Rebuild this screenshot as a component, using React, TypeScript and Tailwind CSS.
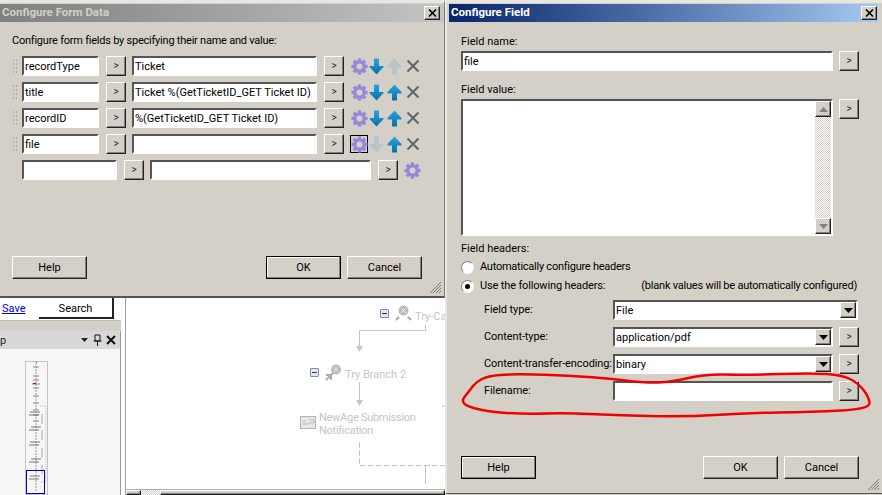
import type { ReactNode } from 'react';

const sunken = 'border-2 border-t-[#555] border-l-[#555] border-b-white border-r-white bg-white';
const raised = 'border border-t-white border-l-white border-b-[#222] border-r-[#222] shadow-[inset_-1px_-1px_0_#808080] bg-[#d4d0c8]';
const checker = 'bg-[conic-gradient(#fff_25%,#d4d0c8_0_50%,#fff_0_75%,#d4d0c8_0)] bg-[length:2px_2px]';

const Field = ({ text, className }: { text?: string; className: string }) => (
  <div className={`${sunken} ${className} h-[20px] pl-px text-[11px] leading-[17px] text-black whitespace-nowrap overflow-hidden shrink-0`}>{text}</div>
);

const MoreBtn = () => (
  <div className={`${raised} w-[20px] h-[20px] shrink-0 flex items-center justify-center text-[10px] leading-none text-[#102040]`}>&gt;</div>
);

const DlgBtn = ({ label, bold, className }: { label: string; bold?: boolean; className?: string }) => (
  <div className={`${bold ? 'border border-black shadow-[inset_-1px_-1px_0_#808080,inset_1px_1px_0_#fff]' : raised} w-[75px] h-[23px] pt-px flex items-center justify-center text-[11px] text-black bg-[#d4d0c8] ${className ?? ''}`}>{label}</div>
);

const Gear = () => (
  <svg width="17" height="17" viewBox="0 0 17 17" className="shrink-0">
    <circle cx="8.5" cy="8.5" r="4.6" fill="none" stroke="#9a86d9" strokeWidth="3.4" />
    {[0, 45, 90, 135].map(a => (
      <rect key={a} x="6.8" y="0.4" width="3.4" height="16.2" fill="#9a86d9" transform={`rotate(${a} 8.5 8.5)`} />
    ))}
    <circle cx="8.5" cy="8.5" r="3" fill="#d4d0c8" />
  </svg>
);

const Arrow = ({ up, off }: { up?: boolean; off?: boolean }) => (
  <svg width="15" height="17" viewBox="0 0 15 17" className="shrink-0">
    <defs>
      <linearGradient id="blueArrow" x1="0" y1="0" x2="0" y2="1">
        <stop offset="0" stopColor="#2ba4dd" />
        <stop offset="1" stopColor="#0670a8" />
      </linearGradient>
    </defs>
    <path
      d={up ? 'M7.5 0.5L14.5 8V9.5H10V16.5H5V9.5H0.5V8Z' : 'M5 0.5H10V8H14.5V9L7.5 16.5L0.5 9V8H5Z'}
      fill={off ? '#b8c4ca' : 'url(#blueArrow)'}
    />
  </svg>
);

const CrossIcon = () => (
  <svg width="14" height="14" viewBox="0 0 14 14" className="shrink-0">
    <path d="M1.5 1.5L12.5 12.5M12.5 1.5L1.5 12.5" stroke="#5d646c" strokeWidth="2" />
  </svg>
);

const CloseBtn = () => (
  <div className={`${raised} w-[16px] h-[14px] flex items-center justify-center`}>
    <svg width="9" height="8" viewBox="0 0 9 8"><path d="M1 0.5L8 7.5M8 0.5L1 7.5" stroke="#000" strokeWidth="1.6" /></svg>
  </div>
);

const Grip = () => (
  <svg width="14" height="14" viewBox="0 0 14 14" className="absolute right-[2px] bottom-[2px]">
    <path d="M13 2L2 13M13 5L5 13M13 8L8 13M13 11L11 13" stroke="#777" strokeWidth="1" />
  </svg>
);

const Dots = () => (
  <div className="w-[7px] h-[16px] mr-[3px] bg-[radial-gradient(#aaa_1px,transparent_1px)] bg-[length:3px_4px] shrink-0" />
);

const rows = [
  { name: 'recordType', value: 'Ticket', upOff: true },
  { name: 'title', value: 'Ticket %(GetTicketID_GET Ticket ID)' },
  { name: 'recordID', value: '%(GetTicketID_GET Ticket ID)' },
  { name: 'file', value: '', downOff: true, focused: true },
];

const FormRow = ({ row }: { row: (typeof rows)[number] }) => (
  <div className="flex items-center h-[20px] mb-[6px] pl-[12px]">
    <Dots />
    <Field text={row.name} className="w-[77px]" />
    <div className="w-[7px]" />
    <MoreBtn />
    <div className="w-[6px]" />
    <Field text={row.value} className="w-[185px]" />
    <div className="w-[7px]" />
    <MoreBtn />
    <div className={`ml-[6px] w-[18px] h-[18px] flex items-center justify-center ${row.focused ? 'border border-black' : ''}`}><Gear /></div>
    <div className="ml-[1px]"><Arrow off={row.downOff} /></div>
    <div className="ml-[3px]"><Arrow up off={row.upOff} /></div>
    <div className="ml-[4px]"><CrossIcon /></div>
  </div>
);

const ConfigureFormData = () => (
  <div className="relative h-[298px] bg-[#d4d0c8] border-b-2 border-b-[#555] border-r border-r-[#808080] border-t-[3px] border-t-[#e8e6e0] shrink-0">
    <div className="h-[18px] mt-px flex items-center justify-between pl-[2px] pr-[4px] bg-gradient-to-r from-[#808080] to-[#c4c4c4]">
      <span className="text-[11.5px] font-bold text-[#d4d0c8]">Configure Form Data</span>
      <CloseBtn />
    </div>
    <div className="pl-[12px] pt-[11px] h-[26px] text-[11px] leading-[16px] tracking-[-0.23px] text-black">Configure form fields by specifying their name and value:</div>
    <div className="mt-[8px]">
      {rows.map(r => <FormRow key={r.name} row={r} />)}
      <div className="flex items-center h-[20px] pl-[22px]">
        <Field className="w-[95px]" />
        <div className="w-[7px]" />
        <MoreBtn />
        <div className="w-[6px]" />
        <Field className="w-[221px]" />
        <div className="w-[7px]" />
        <MoreBtn />
        <div className="ml-[6px]"><Gear /></div>
      </div>
    </div>
    <div className="absolute left-[12px] right-[22px] top-[253px] flex">
      <DlgBtn label="Help" />
      <DlgBtn label="OK" bold className="ml-auto" />
      <DlgBtn label="Cancel" className="ml-[6px]" />
    </div>
    <Grip />
  </div>
);

const Minimap = () => (
  <div className="relative w-[23px] h-[134px] border border-[#c4c4c4] ml-[25px] mt-[12px]">
    <svg width="21" height="132" viewBox="0 0 21 132" className="absolute left-0 top-0">
      <path d="M10 1V130" stroke="#999" strokeWidth="1" strokeDasharray="2 1" />
      <path d="M7 5H13M7 14H13M7 18H13M6 22H14M7 26H13M7 34H13M7 41H13M7 48H13M7 53H13M7 59H13" stroke="#8a8a8a" />
      <path d="M4 50H14M3 53H13M5 65H15M3 68H13M4 80H14M3 83H13M5 97H15M3 100H13M4 114H14M3 117H13" stroke="#777" strokeWidth="1.2" />
      <path d="M14 44H20V120H14" fill="none" stroke="#bbb" strokeDasharray="1 1" />
      <path d="M16 52V62M16 68V78M16 86V96M16 103V112" stroke="#aaa" />
      <rect x="7" y="21" width="3" height="1" fill="#d00" />
      <rect x="10" y="0" width="1" height="1" fill="#090" />
    </svg>
    <div className="absolute left-0 top-[108px] w-[19px] h-[24px] border border-[#0000d0]" />
  </div>
);

const SidePanel = () => (
  <div className="w-[126px] shrink-0 bg-white border-r border-r-[#a0a0a0] flex flex-col">
    <div className="h-[22px] flex bg-white border-b-0">
      <a className="pl-[2px] pt-[3px] w-[39px] text-[11px] text-[#0000e0] underline">Save</a>
      <div className="w-[75px] h-[21px] pt-[3px] border-r-2 border-b-2 border-[#222] flex items-center justify-center text-[11px] text-black">Search</div>
    </div>
    <div className="h-[11px] bg-[#d4d0c8] border-t border-[#b8b8b8] mr-[5px] w-[121px]" />
    <div className="w-[121px] flex-1 flex flex-col border-r border-[#999] bg-[#f6f6f6]">
      <div className="h-[18px] bg-[#d8d8d8] flex items-center pr-[4px] text-[11px] text-[#222]">
        <span className="mr-auto leading-none">p</span>
        <svg width="7" height="4" viewBox="0 0 7 4" className="mr-[5px]"><path d="M0 0H7L3.5 4Z" fill="#222" /></svg>
        <svg width="9" height="12" viewBox="0 0 9 12" className="mr-[4px]"><path d="M2 1H7V7H2ZM0.5 7H8.5M4.5 7V12" fill="none" stroke="#111" /></svg>
        <svg width="10" height="10" viewBox="0 0 10 10"><path d="M1 1L9 9M9 1L1 9" stroke="#111" strokeWidth="2" /></svg>
      </div>
      <Minimap />
    </div>
  </div>
);

const grayText = 'absolute text-[11px] leading-[13px] text-[#c6c6c6] whitespace-nowrap';

const MinusBox = ({ className }: { className: string }) => (
  <div className={`absolute w-[9px] h-[9px] border border-[#7f8fa8] rounded-[1px] bg-[#dfe6f0] flex items-center justify-center ${className}`}>
    <div className="w-[5px] h-px bg-[#334]" />
  </div>
);

const FlowCanvas = () => (
  <div className="relative flex-1 bg-white overflow-hidden">
    <MinusBox className="left-[254px] top-[11px]" />
    <svg width="17" height="17" viewBox="0 0 17 17" className="absolute left-[269px] top-[7px]">
      <circle cx="8.5" cy="5.5" r="5" fill="#bbb" />
      <path d="M6 3L11 8M11 3L6 8" stroke="#eee" />
      <path d="M1 15L4 12M16 15L13 12" stroke="#aaa" strokeWidth="2" />
    </svg>
    <span className={`${grayText} left-[289px] top-[12px]`}>Try-Ca</span>
    <svg width="319" height="198" viewBox="0 0 319 198" className="absolute left-0 top-0">
      <path d="M299.5 27V32.5H233.5V50M233.5 84V102" fill="none" stroke="#c6c6c6" />
      <path d="M230 48H237L233.5 54ZM230 102H237L233.5 108Z" fill="#c6c6c6" />
      <path d="M233.5 144V167.5H319" fill="none" stroke="#c6c6c6" strokeDasharray="6 2" />
      <path d="M299.5 168V186M316 108H319" fill="none" stroke="#c6c6c6" />
    </svg>
    <MinusBox className="left-[184px] top-[70px]" />
    <svg width="17" height="17" viewBox="0 0 17 17" className="absolute left-[199px] top-[66px]">
      <circle cx="11" cy="5.5" r="5" fill="#bbb" />
      <path d="M9 3L13 8M13 3L9 8" stroke="#eee" />
      <path d="M1 16L8 9M1 11H6V16" fill="none" stroke="#aaa" strokeWidth="2" />
    </svg>
    <span className={`${grayText} left-[219px] top-[70px]`}>Try Branch 2</span>
    <svg width="16" height="13" viewBox="0 0 16 13" className="absolute left-[174px] top-[118px]">
      <rect x="0.5" y="0.5" width="15" height="12" fill="#e8e8e8" stroke="#b4b4b4" />
      <path d="M2 5H6M2 8H9M9 4H14V7H9" fill="none" stroke="#bbb" />
    </svg>
    <span className={`${grayText} left-[193px] top-[113px] tracking-[-0.28px]`}>NewAge Submission<br />Notification</span>
    <div className="absolute left-0 right-0 bottom-0 h-[6px] flex bg-[#d4d0c8] border-t border-[#b0b0b0]">
      <div className={`${raised} w-[15px]`} />
      <div className={`${checker} w-[19px]`} />
      <div className={`${raised} flex-1`} />
    </div>
  </div>
);

const Label = ({ children, className }: { children: ReactNode; className?: string }) => (
  <div className={`text-[11px] leading-[16px] text-black whitespace-nowrap ${className ?? ''}`}>{children}</div>
);

const ScrollBtn = ({ up }: { up?: boolean }) => (
  <div className={`${raised} w-[16px] h-[16px] flex items-center justify-center`}>
    <svg width="9" height="5" viewBox="0 0 9 5"><path d={up ? 'M4.5 0L9 5H0Z' : 'M0 0H9L4.5 5Z'} fill="#808080" /></svg>
  </div>
);

const Combo = ({ text, className }: { text: string; className: string }) => (
  <div className={`${sunken} ${className} h-[20px] shrink-0 flex justify-between text-[11px] leading-[17px] pl-px`}>
    <span>{text}</span>
    <div className={`${raised} w-[16px] h-[16px] flex items-center justify-center`}>
      <svg width="9" height="5" viewBox="0 0 9 5"><path d="M0 0H9L4.5 5Z" fill="#000" /></svg>
    </div>
  </div>
);

const Radio = ({ on }: { on?: boolean }) => (
  <div className="w-[13px] h-[13px] rounded-full bg-white border border-t-[#808080] border-l-[#808080] border-b-white border-r-white flex items-center justify-center shrink-0">
    {on && <div className="w-[5px] h-[5px] rounded-full bg-black" />}
  </div>
);

const HeaderRow = ({ label, children, mt }: { label: string; children: ReactNode; mt: string }) => (
  <div className={`flex items-center h-[20px] pl-[23px] ${mt}`}>
    <Label className="w-[129px] tracking-[-0.1px]">{label}</Label>
    {children}
  </div>
);

const ConfigureField = () => (
  <div className="relative flex-1 h-[494px] bg-[#d4d0c8] border-l-2 border-l-[#e8e6e0] border-t-[3px] border-t-[#e8e6e0] border-b border-b-[#555]">
    <div className="h-[18px] mt-px ml-[2px] mr-[4px] flex items-center justify-between pl-[2px] pr-[1px] bg-gradient-to-r from-[#0a246a] to-[#a6caf0]">
      <span className="text-[11.5px] font-bold text-white">Configure Field</span>
      <CloseBtn />
    </div>
    <div className="pl-[14px]">
      <Label className="mt-[12px]">Field name:</Label>
      <div className="flex mt-px">
        <Field text="file" className="w-[372px]" />
        <div className="w-[6px]" />
        <MoreBtn />
      </div>
      <Label className="mt-[11px]">Field value:</Label>
      <div className="flex mt-px">
        <div className={`${sunken} w-[372px] h-[137px] flex justify-end`}>
          <div className={`${checker} w-[16px] flex flex-col justify-between`}>
            <ScrollBtn up />
            <ScrollBtn />
          </div>
        </div>
        <div className="w-[6px]" />
        <MoreBtn />
      </div>
      <Label className="mt-[5px]">Field headers:</Label>
      <div className="flex items-center gap-[6px] mt-[2px] h-[16px]">
        <Radio />
        <Label className="tracking-[-0.25px]">Automatically configure headers</Label>
      </div>
      <div className="flex items-center mt-[3px] h-[16px]">
        <Radio on />
        <Label className="ml-[6px] tracking-[-0.15px]">Use the following headers:</Label>
        <Label className="ml-[36px] tracking-[-0.22px]">(blank values will be automatically configured)</Label>
      </div>
      <HeaderRow label="Field type:" mt="mt-[6px]"><Combo text="File" className="w-[245px]" /></HeaderRow>
      <HeaderRow label="Content-type:" mt="mt-[7px]">
        <Combo text="application/pdf" className="w-[220px]" />
        <div className="w-[6px]" />
        <MoreBtn />
      </HeaderRow>
      <HeaderRow label="Content-transfer-encoding:" mt="mt-[7px]">
        <Combo text="binary" className="w-[220px]" />
        <div className="w-[6px]" />
        <MoreBtn />
      </HeaderRow>
      <HeaderRow label="Filename:" mt="mt-[7px]">
        <Field className="w-[220px]" />
        <div className="w-[6px]" />
        <MoreBtn />
      </HeaderRow>
      <div className="flex mt-[55px] pr-[23px]">
        <DlgBtn label="Help" bold />
        <DlgBtn label="OK" className="ml-auto" />
        <DlgBtn label="Cancel" className="ml-[6px]" />
      </div>
    </div>
    <Grip />
  </div>
);

// hand-drawn red marker loop around the Filename row
const loop = [[459, 404], [470, 390], [476, 382], [488, 376], [512, 374], [555, 375], [605, 378], [645, 383], [672, 382], [705, 374], [745, 375], [812, 373], [842, 375], [858, 383], [869, 397], [870, 409], [812, 412], [745, 413], [685, 417], [612, 415], [568, 413], [525, 414], [488, 412]];
const loopPath = loop.map((p, i) => {
  const n = loop[(i + 1) % loop.length];
  return `${i === 0 ? `M${(p[0] + n[0]) / 2} ${(p[1] + n[1]) / 2}` : `Q${p[0]} ${p[1]} ${(p[0] + n[0]) / 2} ${(p[1] + n[1]) / 2}`}`;
}).join(' ') + ` Q${loop[0][0]} ${loop[0][1]} ${(loop[0][0] + loop[1][0]) / 2} ${(loop[0][1] + loop[1][1]) / 2}`;

const App = () => (
  <div className="relative w-[882px] h-[495px] flex overflow-hidden bg-[#d4d0c8] font-['Roboto',sans-serif]">
    <div className="w-[445px] h-[495px] flex flex-col shrink-0">
      <ConfigureFormData />
      <div className="flex-1 flex min-h-0">
        <SidePanel />
        <FlowCanvas />
      </div>
    </div>
    <ConfigureField />
    <svg width="882" height="495" viewBox="0 0 882 495" className="absolute left-0 top-0 pointer-events-none">
      <path d={loopPath} fill="none" stroke="#f00000" strokeWidth="2.5" strokeLinejoin="round" />
    </svg>
  </div>
);

export default App;
